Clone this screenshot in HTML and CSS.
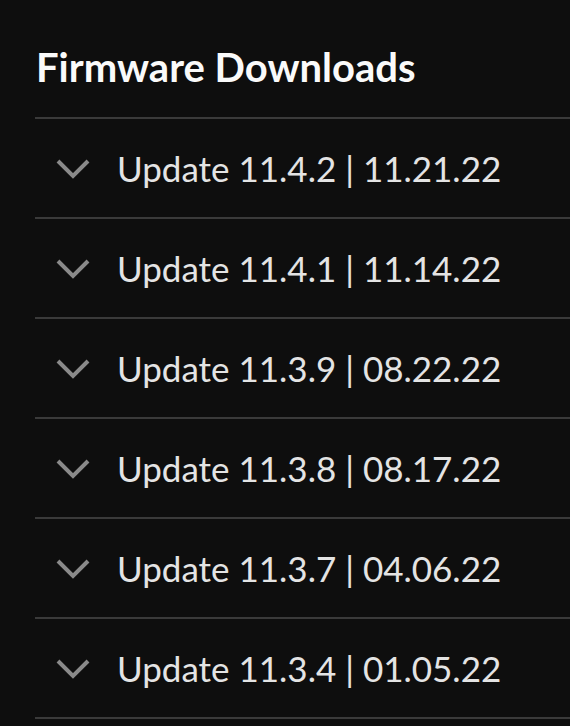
FILE: index.html
```html
<!DOCTYPE html>
<html lang="en">
<head>
    <meta charset="UTF-8">
    <meta name="viewport" content="width=device-width, initial-scale=1.0">
    <title>Firmware Downloads</title>
    <link rel="stylesheet" href="styles.css">
</head>
<body>

    <div class="container">
        <h1>Firmware Downloads</h1>

        <ul class="downloads">
            <li class="download-row">
                <svg class="chevron" viewBox="0 0 34 20"><path d="M2 2 L17 17 L32 2"/></svg>
                <span>Update 11.4.2 | 11.21.22</span>
            </li>
            <li class="download-row">
                <svg class="chevron" viewBox="0 0 34 20"><path d="M2 2 L17 17 L32 2"/></svg>
                <span>Update 11.4.1 | 11.14.22</span>
            </li>
            <li class="download-row">
                <svg class="chevron" viewBox="0 0 34 20"><path d="M2 2 L17 17 L32 2"/></svg>
                <span>Update 11.3.9 | 08.22.22</span>
            </li>
            <li class="download-row">
                <svg class="chevron" viewBox="0 0 34 20"><path d="M2 2 L17 17 L32 2"/></svg>
                <span>Update 11.3.8 | 08.17.22</span>
            </li>
            <li class="download-row">
                <svg class="chevron" viewBox="0 0 34 20"><path d="M2 2 L17 17 L32 2"/></svg>
                <span>Update 11.3.7 | 04.06.22</span>
            </li>
            <li class="download-row">
                <svg class="chevron" viewBox="0 0 34 20"><path d="M2 2 L17 17 L32 2"/></svg>
                <span>Update 11.3.4 | 01.05.22</span>
            </li>
        </ul>
    </div>

</body>
</html>
```

FILE: styles.css
```css
body {
    font-family: 'Lato', sans-serif;
    background-color: #0e0e0e;
    color: #e4e4e4;
    margin: 0;
    padding: 0;
}

.container {
    padding: 0 0 0 35px;
}

h1 {
    font-size: 40px;
    font-weight: 700;
    color: #fafafa;
    margin: 0;
    padding: 42px 0 0 1px;
    height: 75px;
    line-height: 50px;
}

.downloads {
    list-style: none;
    margin: 0;
    padding: 0;
    border-top: 2px solid #3a3a3a;
}

.download-row {
    display: flex;
    align-items: center;
    height: 98px;
    border-bottom: 2px solid #3a3a3a;
    font-size: 35px;
    font-weight: 400;
}

.chevron {
    width: 34px;
    height: 20px;
    margin: 2px 27px 0 21px;
    fill: none;
    stroke: #8a8a8a;
    stroke-width: 4;
}
```
